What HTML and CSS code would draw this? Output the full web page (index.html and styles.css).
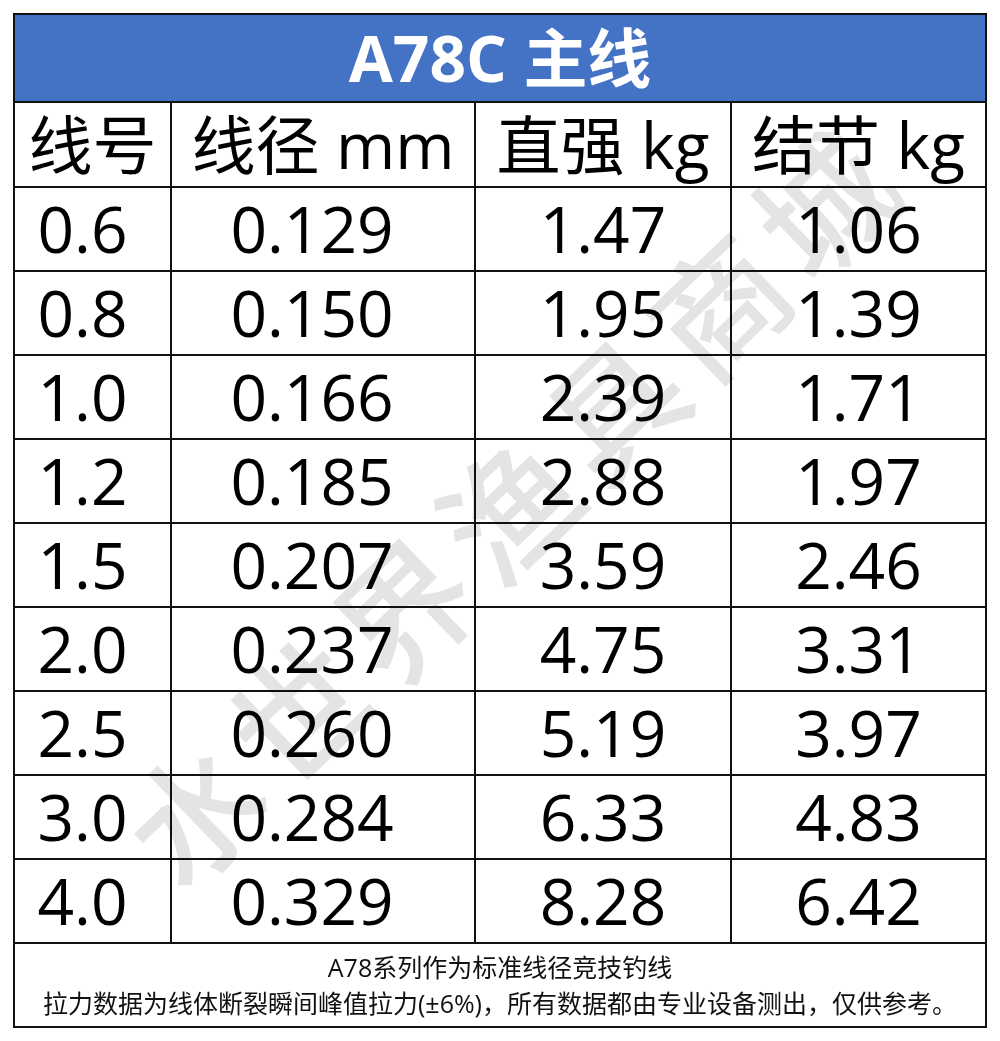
FILE: index.html
```html
<!DOCTYPE html>
<html lang="zh-CN">
<head>
<meta charset="utf-8">
<title>A78C 主线</title>
<link rel="stylesheet" href="styles.css">
</head>
<body>
<div class="page">
  <div class="sheet">
    <div class="title">A78C 主线</div>
    <div class="cell head">线号</div>
    <div class="cell head">线径 mm</div>
    <div class="cell head">直强 kg</div>
    <div class="cell head">结节 kg</div>

    <div class="cell c1">0.6</div><div class="cell c2">0.129</div><div class="cell">1.47</div><div class="cell">1.06</div>
    <div class="cell c1">0.8</div><div class="cell c2">0.150</div><div class="cell">1.95</div><div class="cell">1.39</div>
    <div class="cell c1">1.0</div><div class="cell c2">0.166</div><div class="cell">2.39</div><div class="cell">1.71</div>
    <div class="cell c1">1.2</div><div class="cell c2">0.185</div><div class="cell">2.88</div><div class="cell">1.97</div>
    <div class="cell c1">1.5</div><div class="cell c2">0.207</div><div class="cell">3.59</div><div class="cell">2.46</div>
    <div class="cell c1">2.0</div><div class="cell c2">0.237</div><div class="cell">4.75</div><div class="cell">3.31</div>
    <div class="cell c1">2.5</div><div class="cell c2">0.260</div><div class="cell">5.19</div><div class="cell">3.97</div>
    <div class="cell c1">3.0</div><div class="cell c2">0.284</div><div class="cell">6.33</div><div class="cell">4.83</div>
    <div class="cell c1">4.0</div><div class="cell c2">0.329</div><div class="cell">8.28</div><div class="cell">6.42</div>

    <div class="note">
      <p>A78系列作为标准线径竞技钓线</p>
      <p>拉力数据为线体断裂瞬间峰值拉力(±6%)，所有数据都由专业设备测出，仅供参考。</p>
    </div>
  </div>
  <div class="watermark">水世界渔具商城</div>
</div>
</body>
</html>
```

FILE: styles.css
```css
body {
  margin: 0;
  background: #fff;
}

.page {
  position: relative;
  padding: 13px;
  width: 974px;
}

.sheet {
  display: grid;
  grid-template-columns: 155px 302px 254px 253px;
  grid-template-rows: 86px 83px repeat(9, 82px) 82px;
  gap: 2px;
  padding: 2px;
  background: #111;
  font-family: "Open Sans", "Noto Sans CJK SC", sans-serif;
  color: #000;
}

.title {
  grid-column: 1 / -1;
  background: #4472c4;
  color: #fff;
  font-weight: 700;
  font-size: 64px;
  line-height: 1;
  display: flex;
  align-items: center;
  justify-content: center;
}

.cell {
  background: #fff;
  display: flex;
  align-items: center;
  justify-content: center;
  font-size: 64px;
  line-height: 1;
}

.c1 {
  padding-right: 20px;
}

.c2 {
  padding-right: 22px;
}

.note {
  grid-column: 1 / -1;
  background: #fff;
  font-size: 25px;
  line-height: 36px;
  text-align: center;
  display: flex;
  flex-direction: column;
  justify-content: center;
  color: #111;
}

.note p {
  margin: 0;
}

.watermark {
  position: absolute;
  left: 510px;
  top: 500px;
  transform: translate(-50%, -50%) rotate(-44deg);
  font-family: "Noto Sans CJK SC", sans-serif;
  font-weight: 500;
  font-size: 132px;
  letter-spacing: 14px;
  color: #e4e4e4;
  mix-blend-mode: multiply;
  white-space: nowrap;
  pointer-events: none;
}
```
